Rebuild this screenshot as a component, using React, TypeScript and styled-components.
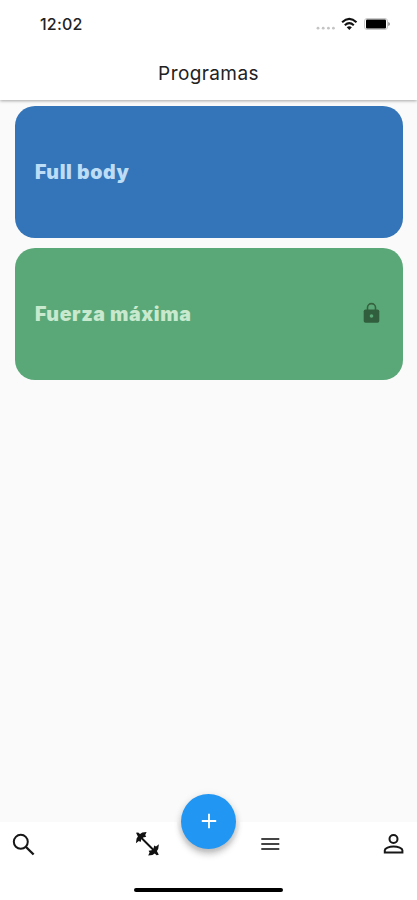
import React from "react";
import styled, { createGlobalStyle } from "styled-components";

const GlobalStyle = createGlobalStyle`
  * { box-sizing: border-box; }
  body { margin: 0; background: #fafafa; font-family: Inter, "Liberation Sans", sans-serif; }
  button { border: 0; padding: 0; background: none; font: inherit; }
  svg { display: block; }
`;

const Screen = styled.div`
  height: 900px;
  width: 417px;
  display: flex;
  flex-direction: column;
  overflow: hidden;
  background: #fafafa;
`;

const Header = styled.header`
  height: 100px;
  flex: none;
  background: #fff;
  box-shadow: 0 1px 3px rgba(0, 0, 0, 0.34);
`;

const StatusBar = styled.div`
  height: 48px;
  padding: 0 27px 0 40px;
  display: flex;
  align-items: center;
  justify-content: space-between;
`;

const Clock = styled.span`
  font-size: 16px;
  font-weight: 500;
  line-height: 20px;
  letter-spacing: 0.2px;
  color: #222;
`;

const Title = styled.h1`
  margin: 0;
  padding-top: 13px;
  font-size: 19px;
  line-height: 26px;
  font-weight: 400;
  letter-spacing: 0.4px;
  text-align: center;
  color: #222;
`;

const ProgramList = styled.main`
  flex: 1;
  display: flex;
  flex-direction: column;
  gap: 10px;
  padding: 6px 14px 0 15px;
`;

const ProgramCard = styled.article<{ $bg: string; $color: string }>`
  height: 132px;
  padding: 0 23px 0 20px;
  display: flex;
  align-items: center;
  justify-content: space-between;
  border-radius: 20px;
  background: ${(p) => p.$bg};
  color: ${(p) => p.$color};
`;

const ProgramName = styled.h2`
  margin: 0;
  padding-bottom: 1px;
  font-size: 19.5px;
  line-height: 24px;
  font-weight: 900;
  letter-spacing: 0.62px;
`;

const BottomBar = styled.nav`
  position: relative;
  height: 78px;
  flex: none;
  display: flex;
  flex-direction: column;
  align-items: center;
  justify-content: space-between;
  background: radial-gradient(circle at 208.5px -1px, transparent 31px, #fff 32px);
`;

const Tabs = styled.div`
  width: 100%;
  height: 44px;
  padding: 0 11px;
  display: flex;
  justify-content: space-between;
  align-items: center;
`;

const TabGroup = styled.div`
  width: 149px;
  display: flex;
  justify-content: space-between;
`;

const TabButton = styled.button`
  width: 25px;
  height: 26px;
  display: grid;
  place-items: center;
`;

const AddButton = styled.button`
  position: absolute;
  top: -28.5px;
  left: 181px;
  width: 55px;
  height: 55px;
  display: grid;
  place-items: center;
  border-radius: 50%;
  background: #2196f3;
  box-shadow: 0 5px 7px rgba(0, 0, 0, 0.22), 0 1px 9px rgba(0, 0, 0, 0.09);
`;

const HomeIndicator = styled.div`
  width: 149px;
  height: 4px;
  margin-bottom: 8px;
  border-radius: 2px;
  background: #000;
`;

const StatusGlyphs = () => (
  <svg width="76" height="20" viewBox="0 0 76 20">
    <g fill="#c4c4c4">
      <circle cx="4" cy="14.2" r="1.4" />
      <circle cx="9.2" cy="14.2" r="1.4" />
      <circle cx="14.4" cy="14.2" r="1.4" />
      <circle cx="19.4" cy="14.2" r="1.4" />
    </g>
    <g fill="none" stroke="#111" strokeWidth="2.1">
      <path d="M28.1 8.2Q35.3 1.6 42.5 8.2" />
      <path d="M30.8 11.2Q35.3 7.2 39.8 11.2" />
    </g>
    <path d="M32.7 13.2Q35.3 11.2 37.9 13.2L35.3 16Z" fill="#111" />
    <rect x="50.5" y="4.5" width="23" height="11" rx="2.5" fill="#fff" stroke="#c9c9c9" />
    <rect x="52" y="5.6" width="20" height="8.8" rx="1" fill="#000" />
    <path d="M74.4 8v4q1.4-.6 1.4-2t-1.4-2" fill="#777" />
  </svg>
);

const LockIcon = () => (
  <svg width="17" height="26" viewBox="0 0 17 26">
    <path d="M4.5 9V6.6a4 4 0 0 1 8 0V9" fill="none" stroke="#36633f" strokeWidth="1.6" />
    <rect x=".7" y="8.5" width="15.6" height="13.2" rx="1.8" fill="#315f3e" />
    <circle cx="8.5" cy="15" r="1.8" fill="#5aa878" />
  </svg>
);

const SearchIcon = () => (
  <svg width="25" height="25" viewBox="0 0 25 25" fill="none" stroke="#161616">
    <circle cx="9.8" cy="9.8" r="7" strokeWidth="2" />
    <path d="m15 15 7.6 7.5" strokeWidth="2.4" />
  </svg>
);

const DumbbellIcon = () => (
  <svg width="26" height="26" viewBox="0 0 26 26" fill="#111">
    <path d="M5 5.5 19.5 20" stroke="#111" strokeWidth="2" />
    <path d="M1 1.8 3.2 1.4 5 3 7.3 1.5 11.6 1 10.2 4 11.2 5.8 8.2 6.4 6.3 8.2 5.6 11 3.8 10 .9 12.2 1.6 7.6 2.9 5.6Z" />
    <path d="M23.8 23.8 21.6 24.2 19.8 22.6 17.4 24.1 13.2 24.6 14.6 21.6 13.6 19.8 16.6 19.2 18.5 17.4 19.2 14.6 21 15.6 23.9 13.2 23.2 18 21.9 20Z" />
  </svg>
);

const MenuIcon = () => (
  <svg width="20" height="14" viewBox="0 0 20 14">
    <path d="M1.3 2h18M1.3 7h18M1.3 12h18" stroke="#444" strokeWidth="1.8" />
  </svg>
);

const PersonIcon = () => (
  <svg width="24" height="24" viewBox="0 0 24 24" fill="none" stroke="#171717" strokeWidth="2">
    <circle cx="11.5" cy="7" r="4" />
    <path d="M2.8 20.5v-2.2c0-2 4.4-3.8 8.8-3.8s8.8 1.8 8.8 3.8v2.2Z" />
  </svg>
);

const PlusIcon = () => (
  <svg width="16" height="16" viewBox="0 0 16 16">
    <path d="M8 .8v14.4M.8 8h14.4" stroke="#fff" strokeWidth="1.8" />
  </svg>
);

export default function App() {
  return (
    <Screen>
      <GlobalStyle />
      <Header>
        <StatusBar>
          <Clock>12:02</Clock>
          <StatusGlyphs />
        </StatusBar>
        <Title>Programas</Title>
      </Header>
      <ProgramList>
        <ProgramCard $bg="#3375b8" $color="#bddcf5">
          <ProgramName>Full body</ProgramName>
        </ProgramCard>
        <ProgramCard $bg="#5aa878" $color="#c8e9cd">
          <ProgramName>Fuerza máxima</ProgramName>
          <LockIcon />
        </ProgramCard>
      </ProgramList>
      <BottomBar>
        <Tabs>
          <TabGroup>
            <TabButton aria-label="Buscar"><SearchIcon /></TabButton>
            <TabButton aria-label="Programas"><DumbbellIcon /></TabButton>
          </TabGroup>
          <TabGroup>
            <TabButton aria-label="Menú"><MenuIcon /></TabButton>
            <TabButton aria-label="Perfil"><PersonIcon /></TabButton>
          </TabGroup>
        </Tabs>
        <HomeIndicator />
        <AddButton aria-label="Añadir"><PlusIcon /></AddButton>
      </BottomBar>
    </Screen>
  );
}
